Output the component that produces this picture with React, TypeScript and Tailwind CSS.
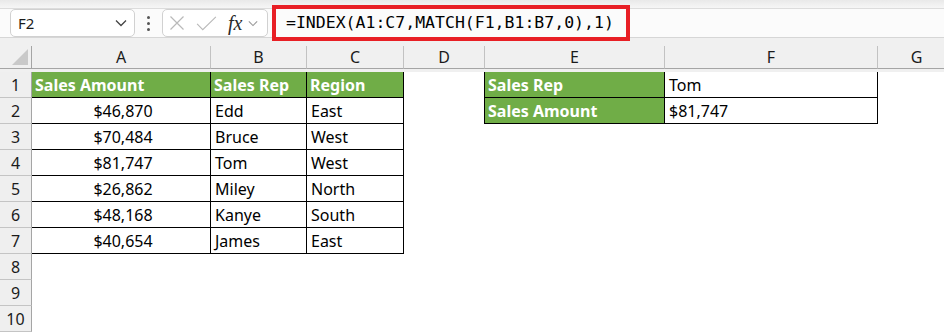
import React from 'react';

const cols = [
  { key: 'A', width: 179 },
  { key: 'B', width: 96 },
  { key: 'C', width: 97 },
  { key: 'D', width: 81 },
  { key: 'E', width: 180 },
  { key: 'F', width: 213 },
  { key: 'G', width: 78 },
];

type CellData = { text?: string; head?: boolean; center?: boolean };

const sales = [
  ['$46,870', 'Edd', 'East'],
  ['$70,484', 'Bruce', 'West'],
  ['$81,747', 'Tom', 'West'],
  ['$26,862', 'Miley', 'North'],
  ['$48,168', 'Kanye', 'South'],
  ['$40,654', 'James', 'East'],
];

function getCell(row: number, col: string): CellData {
  if (row === 1) {
    if (col === 'A') return { text: 'Sales Amount', head: true };
    if (col === 'B') return { text: 'Sales Rep', head: true };
    if (col === 'C') return { text: 'Region', head: true };
    if (col === 'E') return { text: 'Sales Rep', head: true };
    if (col === 'F') return { text: 'Tom' };
  }
  if (row === 2) {
    if (col === 'E') return { text: 'Sales Amount', head: true };
    if (col === 'F') return { text: '$81,747' };
  }
  if (row >= 2 && row <= 7) {
    const r = sales[row - 2];
    if (col === 'A') return { text: r[0], center: true };
    if (col === 'B') return { text: r[1] };
    if (col === 'C') return { text: r[2] };
  }
  return {};
}

function cellBorder(row: number, col: string) {
  const inMain = row <= 7 && ['A', 'B', 'C'].includes(col);
  const inLookup = row <= 2 && ['E', 'F'].includes(col);
  if (inMain || inLookup) return 'border-r border-b border-black';
  if (col === 'D' && row <= 2) return 'border-r border-black';
  return '';
}

function Chevron({ className }: { className?: string }) {
  return (
    <svg viewBox="0 0 12 8" className={className} fill="none" stroke="currentColor" strokeWidth="1.3">
      <path d="M1 1.5l5 5 5-5" />
    </svg>
  );
}

export default function App() {
  const rows = [1, 2, 3, 4, 5, 6, 7, 8, 9, 10];
  return (
    <div className="w-[944px] h-[332px] overflow-hidden bg-white text-[#1b1b1b]" style={{ fontFamily: '"Noto Sans", sans-serif' }}>
      {/* ribbon edge */}
      <div className="h-[9px] bg-gradient-to-b from-[#e9e9e9] to-[#f6f6f6] border-b border-[#dcdcdc]" />

      {/* formula bar */}
      <div className="h-[29px] flex items-center bg-[#fbfbfb] border-b border-[#d6d6d6]">
        <div className="ml-[10px] w-[125px] h-[28px] rounded-[5px] border border-[#d1d1d1] bg-white flex items-center justify-between pl-[7px] pr-[7px]">
          <span className="text-[15px]">F2</span>
          <Chevron className="w-[12px] h-[8px] text-[#444]" />
        </div>
        <div className="w-[27px] flex flex-col items-center gap-[3px]">
          <span className="w-[3px] h-[3px] bg-[#555] rounded-full" />
          <span className="w-[3px] h-[3px] bg-[#555] rounded-full" />
          <span className="w-[3px] h-[3px] bg-[#555] rounded-full" />
        </div>
        <div className="w-[106px] h-[28px] rounded-[5px] border border-[#d1d1d1] bg-white flex items-center pl-[6px]">
          <svg viewBox="0 0 16 16" className="w-[16px] h-[16px]" fill="none" stroke="#b9b9b9" strokeWidth="1.2">
            <path d="M1.5 1.5l13 13M14.5 1.5l-13 13" />
          </svg>
          <svg viewBox="0 0 22 16" className="ml-[11px] w-[21px] h-[15px]" fill="none" stroke="#b9b9b9" strokeWidth="1.2">
            <path d="M1 8.5l6 6L21 1" />
          </svg>
          <span className="ml-[11px] text-[20px] leading-none italic text-[#2a2a2a]" style={{ fontFamily: '"Liberation Serif", serif' }}>fx</span>
          <Chevron className="ml-[6px] w-[10px] h-[7px] text-[#999]" />
        </div>
        <div className="relative flex-1 h-full ml-[4px]">
          <div className="absolute left-0 top-[-4px] w-[358px] h-[36px] border-[4px] border-[#e81f25]" />
          <div className="h-full flex items-center pl-[14px] text-[16.5px] text-black" style={{ fontFamily: '"DejaVu Sans Mono", monospace' }}>
            =INDEX(A1:C7,MATCH(F1,B1:B7,0),1)
          </div>
        </div>
      </div>

      {/* sheet */}
      <div className="bg-[#f0f0f0] pt-[8px] h-full">
        <div
          className="grid"
          style={{ gridTemplateColumns: `32px ${cols.map((c) => c.width + 'px').join(' ')}`, gridAutoRows: '26px' }}
        >
          {/* column headers */}
          <div className="h-[23px] relative border-r border-b border-[#a5a5a5] flex items-end justify-end pr-[3px] pb-[3px]">
            <svg viewBox="0 0 16 16" className="w-[16px] h-[16px]">
              <path d="M16 0V16H0z" fill="#c9c9c9" />
            </svg>
          </div>
          {cols.map((c) => (
            <div
              key={c.key}
              className="h-[23px] border-r border-b border-r-[#c2c2c2] border-b-[#a5a5a5] flex items-center justify-center text-[16px]"
            >
              {c.key}
            </div>
          ))}

          {rows.map((r) => (
            <React.Fragment key={r}>
              <div className="bg-[#efefef] border-r border-b border-r-[#a5a5a5] border-b-[#c4c4c4] flex items-center justify-center text-[16px]">
                {r}
              </div>
              {cols.map((c) => {
                const d = getCell(r, c.key);
                return (
                  <div
                    key={c.key}
                    className={`flex items-center overflow-hidden whitespace-nowrap text-[16px] ${cellBorder(r, c.key)} ${
                      d.head ? 'bg-[#70ad47] text-white font-bold pl-[3px]' : 'bg-white text-black pl-[4px]'
                    } ${d.center ? 'justify-center pl-0' : ''}`}
                  >
                    {d.text}
                  </div>
                );
              })}
            </React.Fragment>
          ))}
          <div className="bg-[#efefef] border-r border-[#a5a5a5]" />
          <div className="bg-white col-span-7" />
        </div>
      </div>
    </div>
  );
}
